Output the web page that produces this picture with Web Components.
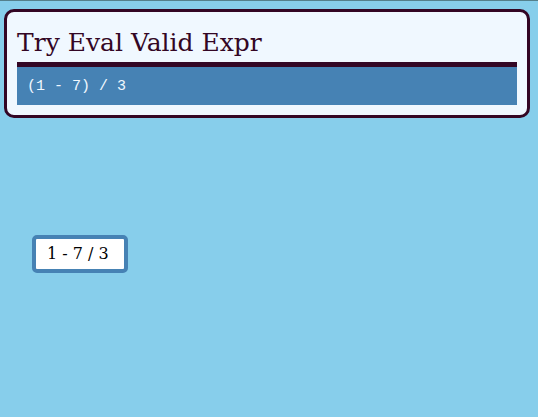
<!DOCTYPE html>
<html lang="en">
<head>
<meta charset="utf-8">
<title>Try Eval Valid Expr</title>
<style>
  html { height: 100%; }
  body {
    margin: 0;
    min-height: 100%;
    box-sizing: border-box;
    display: flex;
    flex-direction: column;
    border-top: 1px solid #54808c;
    background: #87ceeb;
    font-family: "DejaVu Serif", serif;
  }
</style>
</head>
<body>
<expr-card>
  <span slot="title">Try Eval Valid Expr</span>
  <code slot="code">(1 - 7) / 3</code>
</expr-card>
<expr-canvas>
  <expr-block>1 - 7 / 3</expr-block>
</expr-canvas>
<script>
  class ExprCard extends HTMLElement {
    constructor() {
      super();
      this.attachShadow({ mode: "open" }).innerHTML = `
        <style>
          :host {
            display: block;
            margin: 8px 8px 0 4px;
            padding: 10px;
            border: 3px solid #330624;
            border-radius: 10px;
            background: #f0f8ff;
          }
          h1 {
            margin: 0;
            padding-top: 2px;
            border-bottom: 5px solid #330624;
            color: #330624;
            font-size: 25px;
            font-weight: 400;
            line-height: 38px;
          }
          .code {
            padding: 12px 10px 10px;
            background: #4682b4;
            color: #f0f8ff;
            font-family: "Liberation Mono", monospace;
            font-size: 15px;
            line-height: 16px;
          }
          ::slotted(code) {
            display: block;
            font-family: "Liberation Mono", monospace;
          }
        </style>
        <h1><slot name="title"></slot></h1>
        <div class="code"><slot name="code"></slot></div>`;
    }
  }

  class ExprCanvas extends HTMLElement {
    constructor() {
      super();
      this.attachShadow({ mode: "open" }).innerHTML = `
        <style>
          :host { display: block; flex: 1; position: relative; }
          ::slotted(expr-block) { position: absolute; left: 32px; top: 117px; }
        </style>
        <slot></slot>`;
    }
  }

  class ExprBlock extends HTMLElement {
    constructor() {
      super();
      this.attachShadow({ mode: "open" }).innerHTML = `
        <style>
          :host {
            display: block;
            padding: 5px 15px 5px 11px;
            border: 4px solid #4682b4;
            border-radius: 5px;
            background: #fff;
            color: #000;
            font-size: 16px;
            line-height: 20px;
            white-space: nowrap;
          }
        </style>
        <slot></slot>`;
    }
  }

  customElements.define("expr-card", ExprCard);
  customElements.define("expr-canvas", ExprCanvas);
  customElements.define("expr-block", ExprBlock);
</script>
</body>
</html>
